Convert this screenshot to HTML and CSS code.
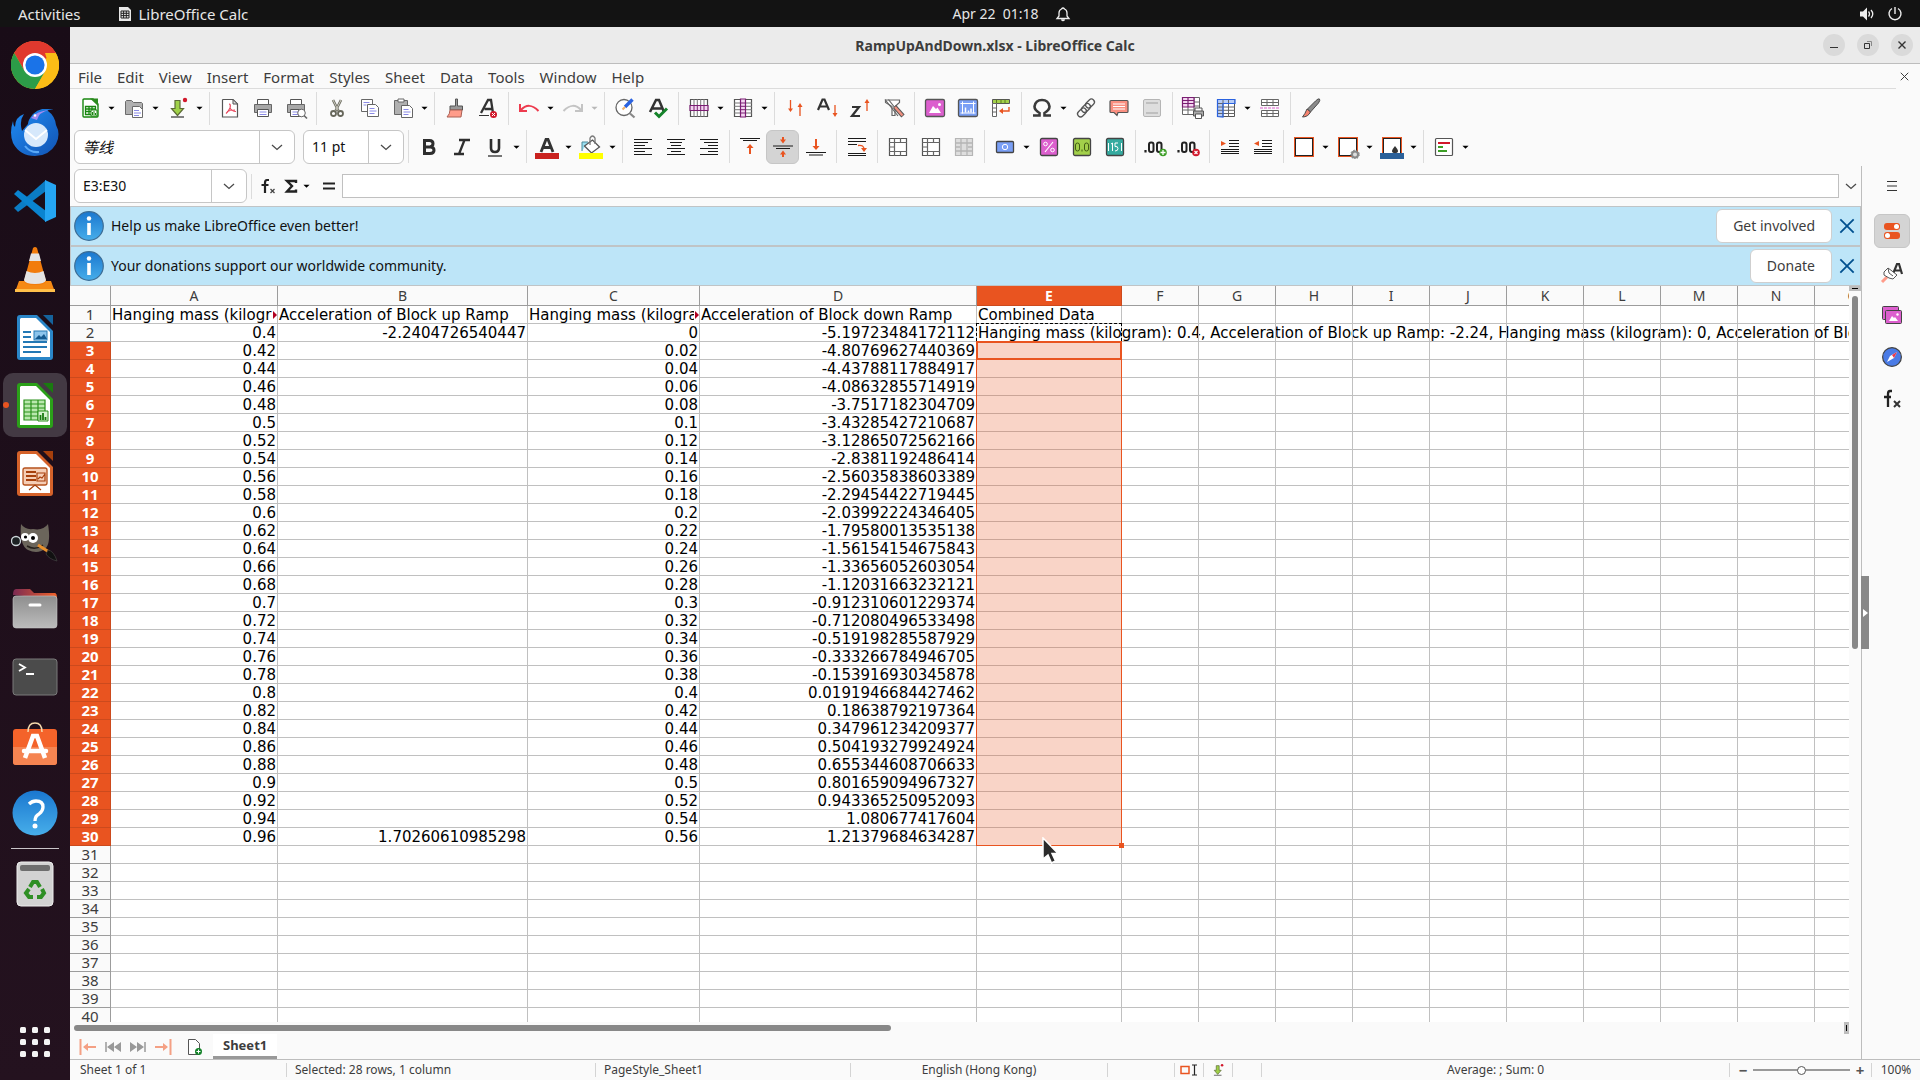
FILE: index.html
```html
<!DOCTYPE html>
<html lang="en">
<head>
<meta charset="utf-8">
<title>RampUpAndDown.xlsx - LibreOffice Calc</title>
<link rel="stylesheet" href="styles.css">
</head>
<body>
<svg class="sprite" aria-hidden="true">
  <defs>
    <linearGradient id="gInfo" x1="0" y1="0" x2="0" y2="1"><stop offset="0" stop-color="#1a77cf"/><stop offset="1" stop-color="#47aeea"/></linearGradient>
    <linearGradient id="gFold" x1="0" y1="0" x2="1" y2="0"><stop offset="0" stop-color="#7b2a52"/><stop offset="1" stop-color="#f0622a"/></linearGradient>
    <linearGradient id="gGrey" x1="0" y1="0" x2="0" y2="1"><stop offset="0" stop-color="#8e8e8e"/><stop offset="1" stop-color="#bcbcbc"/></linearGradient>
    <linearGradient id="gBird" x1="0" y1="0" x2="1" y2="1"><stop offset="0" stop-color="#1f8df5"/><stop offset="1" stop-color="#1253b3"/></linearGradient>
  </defs>
  <symbol id="new" viewBox="0 0 24 24"><path d="M6 3h9l5 5v12q0 1-1 1H6q-1 0-1-1V4q0-1 1-1z" fill="#fff" stroke="#18870f" stroke-width="1.4"/><path d="M12 2.500h8V10z" fill="#2b8a1e"/><path d="M7.500 10.500h10v8h-10zM7.500 13h10M7.500 15.500h6M11 10.500v8M14 10.500v4" fill="none" stroke="#18870f" stroke-width="1.3"/><path d="M13 14h6v6h-6z" fill="#fff" stroke="#18870f"/><path d="M14.500 16v3M16 15v4M17.500 17v2" stroke="#18870f"/></symbol>
  <symbol id="open" viewBox="0 0 24 24"><path d="M3.500 18.500V5.500l1-1h5l2 2h8l1 1v11z" fill="#b0b0b0" stroke="#6b6b6b"/><path d="M10.500 10.500h7l3 3v8h-10z" fill="#fff" stroke="#6b6b6b"/><path d="M12 14.500h5M12 17h7M12 19.500h5" stroke="#8a8ae6"/></symbol>
  <symbol id="save" viewBox="0 0 24 24"><path d="M9 4.500h5v8h3.500l-6 7-6-7H9z" fill="#9fd148" stroke="#5c6b35" stroke-width="1.200"/><path d="M5 21h13" stroke="#4d4d4d" stroke-width="1.400"/><circle cx="19" cy="4" r="2.200" fill="#d1182b"/></symbol>
  <symbol id="pdf" viewBox="0 0 24 24"><path d="M5 3.500h10l4.500 4.500v13H4.500v-17z" fill="#fff" stroke="#555" stroke-width="1.200"/><path d="M15 3.500v4.500h4.500z" fill="#ddd" stroke="#555"/><path d="M11 8q2 0 1 4-2 4-4 5.500M12 12q2 3.500 6 3.500M9 15.500q4-1.500 8-1.500" fill="none" stroke="#e8465c" stroke-width="1.200"/></symbol>
  <symbol id="print" viewBox="0 0 24 24"><path d="M6.500 9V3.500h11V9" fill="#fff" stroke="#555"/><path d="M3.500 8.500h17v8h-17z" fill="#a8a8a8" stroke="#666"/><path d="M6.500 13.500h11v7h-11z" fill="#fff" stroke="#555"/><path d="M8.500 16h7M8.500 18.500h7" stroke="#8a8ae6"/></symbol>
  <symbol id="preview" viewBox="0 0 24 24"><use href="#print"/><circle cx="17.500" cy="17" r="3.800" fill="#fff" stroke="#666"/><path d="M20 19.500l3 3" stroke="#666" stroke-width="1.600"/></symbol>
  <symbol id="cut" viewBox="0 0 24 24"><path d="M8 4l5.500 11M16 4l-5.500 11" stroke="#66665a" stroke-width="2.600"/><path d="M8 4l5.500 11M16 4l-5.500 11" stroke="#d0cfc4" stroke-width="1"/><circle cx="8.500" cy="17.500" r="2.500" fill="none" stroke="#66665a" stroke-width="1.800"/><circle cx="15.500" cy="17.500" r="2.500" fill="none" stroke="#66665a" stroke-width="1.800"/></symbol>
  <symbol id="copy" viewBox="0 0 24 24"><path d="M3.500 3.500h11v12h-11z" fill="#fff" stroke="#666"/><path d="M9.500 8.500h8l3 3v9h-11z" fill="#fff" stroke="#666"/><path d="M5.500 6.500h6M5.500 9h3M11.500 12.500h5M11.500 15h7M11.500 17.500h5" stroke="#8a8ae6"/></symbol>
  <symbol id="paste" viewBox="0 0 24 24"><path d="M3.500 4.500h13v14h-13z" fill="#b0b0b0" stroke="#666"/><path d="M7 3h6v3H7z" fill="#fff" stroke="#666"/><path d="M10.500 9.500h8l3 3v9h-11z" fill="#fff" stroke="#666"/><path d="M12.500 13.500h5M12.500 16h7M12.500 18.500h5" stroke="#8a8ae6"/></symbol>
  <symbol id="brush" viewBox="0 0 24 24"><path d="M12.500 3h2v7h5v4H7v-4h5.500z" fill="#999" stroke="#555"/><path d="M7 14h12l-1 7H4q3-3 3-7z" fill="#ff9c8a" stroke="#aa6055"/></symbol>
  <symbol id="clear" viewBox="0 0 24 24"><path d="M5 17L12 4h3l2 13M8.500 13H16" fill="none" stroke="#333" stroke-width="2.300"/><path d="M3 19.500h10" stroke="#333"/><circle cx="17.500" cy="18.500" r="3.500" fill="#d1182b"/><path d="M16 17l3 3M19 17l-3 3" stroke="#fff"/></symbol>
  <symbol id="undo" viewBox="0 0 24 24"><path d="M3 8v7h7M3.500 14.500Q12 5 21.500 15" fill="none" stroke="#ed3b4e" stroke-width="2"/></symbol>
  <symbol id="redo" viewBox="0 0 24 24"><path d="M21 8v7h-7M20.500 14.500Q12 5 2.500 15" fill="none" stroke="#c4c4c4" stroke-width="2"/></symbol>
  <symbol id="find" viewBox="0 0 24 24"><circle cx="11" cy="11.500" r="8" fill="#fff" stroke="#666" stroke-width="1.300"/><path d="M17 17.500l4.500 4" stroke="#888" stroke-width="2.200"/><path d="M12 11l7.500-7.500" stroke="#2b63e0" stroke-width="3.400"/><path d="M9.500 13.500l2.500-2.500" stroke="#f2b36b" stroke-width="2.200"/></symbol>
  <symbol id="spell" viewBox="0 0 24 24"><path d="M4 16L10 4h3l5 12M6.500 12.500h9" fill="none" stroke="#333" stroke-width="2.500"/><path d="M9 16.500l4 4 8-8" fill="none" stroke="#15832a" stroke-width="3"/></symbol>
  <symbol id="rows" viewBox="0 0 24 24"><path d="M3.500 3.500h17v17h-17z" fill="#fff" stroke="#555" stroke-width="1.200"/><path d="M7 3v18M10.300 3v18M13.700 3v18M17 3v18" stroke="#777"/><path d="M3 9.500h18v5H3z" fill="#f3d6f0" stroke="#7a1d72" stroke-width="1.200"/><path d="M7 9v6M10.300 9v6M13.700 9v6M17 9v6" stroke="#7a1d72"/></symbol>
  <symbol id="cols" viewBox="0 0 24 24"><path d="M3.500 3.500h17v17h-17z" fill="#fff" stroke="#555" stroke-width="1.200"/><path d="M3 7h18M3 10.300h18M3 13.700h18M3 17h18" stroke="#777"/><path d="M9.500 3v18h5V3z" fill="#f3d6f0" stroke="#7a1d72" stroke-width="1.200"/><path d="M9 7h6M9 10.300h6M9 13.700h6M9 17h6" stroke="#7a1d72"/></symbol>
  <symbol id="sort" viewBox="0 0 24 24"><path d="M7.500 4v10M17 9v11" stroke="#e95420" stroke-width="1.300"/><path d="M5 12.500h5l-2.500 3.500zM14.500 11h5L17 7z" fill="#e95420"/></symbol>
  <symbol id="sortaz" viewBox="0 0 24 24"><path d="M2 14L6.500 3.500h2L13 14M4 10.500h7" fill="none" stroke="#333" stroke-width="2.200"/><path d="M19 9v9" stroke="#e95420" stroke-width="1.300"/><path d="M16.500 17h5L19 21z" fill="#e95420"/></symbol>
  <symbol id="sortza" viewBox="0 0 24 24"><path d="M3 11h7l-7 9h8" fill="none" stroke="#333" stroke-width="2.200"/><path d="M18 6v9" stroke="#e95420" stroke-width="1.300"/><path d="M15.500 7h5L18 3z" fill="#e95420"/></symbol>
  <symbol id="filter" viewBox="0 0 24 24"><path d="M3.500 4h14v2.500l-4.500 4v9h-3v-9L3.500 6.500z" fill="#fff" stroke="#666" stroke-width="1.200"/><path d="M3 3.500L16 20M6.500 3.500l7 9" stroke="#666" stroke-width="1.200"/><path d="M12.500 10.500L21 20" stroke="#555" stroke-width="4.400"/><path d="M13 11l7.500 8.500" stroke="#f09080" stroke-width="2.400"/></symbol>
  <symbol id="image" viewBox="0 0 24 24"><rect x="2.500" y="3.500" width="19" height="17" rx="1.500" fill="#dc5fce" stroke="#555" stroke-width="1.300"/><path d="M6 17l4-7 3 3 1.500-1.500L18 17z" fill="#fff"/><circle cx="16.500" cy="8.500" r="1.500" fill="#fff"/></symbol>
  <symbol id="chart" viewBox="0 0 24 24"><rect x="2.500" y="3.500" width="19" height="17" rx="1.500" fill="#7a9ff5" stroke="#555" stroke-width="1.300"/><path d="M6.500 5.500v12M4.500 7.500h15M17.500 5.500v12M4.500 17h15" fill="none" stroke="#fff"/><path d="M9.500 16.500v-5M12.500 16.500v-2M15 16.500v-4" stroke="#fff" stroke-width="1.500"/></symbol>
  <symbol id="pivot" viewBox="0 0 24 24"><path d="M3.500 3.500h17v4h-17z" fill="#a2d04a" stroke="#555"/><path d="M7.500 3.500v4M12 3.500v4M16 3.500v4" stroke="#5c7a20"/><path d="M3.500 7.500h4v13h-4zM3.500 12h4M3.500 16h4" fill="#fff" stroke="#666"/><path d="M20 11v4h-7" fill="none" stroke="#e95420" stroke-width="1.400"/><path d="M14 12v6l-4-3z" fill="#e95420"/></symbol>
  <symbol id="omega" viewBox="0 0 24 24"><path d="M3 19.500h6.500v-2.500Q4.500 14 4.500 10.500 5.500 4 12 4t7.500 6.500q0 3.500-5 6.500v2.500H21" fill="none" stroke="#3a3a3a" stroke-width="2.600"/></symbol>
  <symbol id="link" viewBox="0 0 24 24"><g fill="none" stroke="#555" stroke-width="1.300"><rect x="11" y="4.500" width="10" height="6" rx="3" transform="rotate(-45 16 7.500)"/><rect x="7" y="9" width="10" height="6" rx="3" transform="rotate(-45 12 12)"/><rect x="3" y="13.500" width="10" height="6" rx="3" transform="rotate(-45 8 16.500)"/></g></symbol>
  <symbol id="comment" viewBox="0 0 24 24"><path d="M4 4.500h16q1 0 1 1v10q0 1-1 1h-9l-1 3-3-3H4q-1 0-1-1v-10q0-1 1-1z" fill="#f98f80" stroke="#555" stroke-width="1.200"/><path d="M6 8h12M6 10.500h12M6 13h12" stroke="#fff"/></symbol>
  <symbol id="headfoot" viewBox="0 0 24 24"><rect x="3.500" y="3.500" width="17" height="17" rx="1.500" fill="#dedede" stroke="#b5b5b5"/><path d="M6 7h12M6 17h12" stroke="#b5b5b5" stroke-width="1.300"/></symbol>
  <symbol id="printarea" viewBox="0 0 24 24"><path d="M1.500 1.500h17v17h-17zM13 1v17M1 6h18M1 10h18M1 14h18M7 1v17" fill="#fff" stroke="#666"/><path d="M1.500 1.500H13V11H1.500zM7 1v10M1 4.500h12M1 7.500h12" fill="#f3d6f0" stroke="#7a1d72" stroke-width="1.200"/><path d="M14 15v-3h7v3" fill="#fff" stroke="#555"/><path d="M12.500 15h10v5h-10z" fill="#aaa" stroke="#555"/><path d="M14.500 18h6v4.500h-6z" fill="#fff" stroke="#555"/></symbol>
  <symbol id="freeze" viewBox="0 0 24 24"><path d="M3.500 3.500h17v17h-17z" fill="#fff" stroke="#555"/><path d="M3.500 3.500h17v4H9v13H3.500z" fill="#b7cdf8"/><path d="M9 3v18M14.500 3v18M3 7.500h18M3 11h18M3 14.300h18M3 17.500h18" stroke="#666"/><path d="M9 21V7.500H21V3.500H3.500V20.500z" fill="none" stroke="#2b63e0" stroke-width="1.200"/></symbol>
  <symbol id="split" viewBox="0 0 24 24"><path d="M3.500 3.500h17v6h-17zM3 6.500h18M9 3v7M15 3v7M3.500 14.500h17v6h-17zM3 17.500h18M9 14v7M15 14v7" fill="#fff" stroke="#666"/><path d="M2 12h20" stroke="#dc5fce" stroke-dasharray="3 1"/></symbol>
  <symbol id="draw" viewBox="0 0 24 24"><path d="M20.500 3q1 1-1 4l-8 9-3-3 8-8q3-3 4-2z" fill="#8a8a8a" stroke="#4d4d4d"/><path d="M8 13l3.500 3Q9 21 3.500 21 6 18 8 13z" fill="#f5836f" stroke="#4d4d4d"/></symbol>
  <symbol id="bold" viewBox="0 0 24 24"><path d="M6 5.500h6.500q3.500 0 3.500 3T13 12H8h5.500q3.500 0 3.500 3.200t-4 3.300H6M7.500 4.500v15" fill="none" stroke="#2e2e2e" stroke-width="3"/></symbol>
  <symbol id="italic" viewBox="0 0 24 24"><path d="M9 5h11M4 19h10M14.500 5L9 19" fill="none" stroke="#2e2e2e" stroke-width="2.300"/></symbol>
  <symbol id="underline" viewBox="0 0 24 24"><path d="M8 4v9q0 4 4 4t4-4V4" fill="none" stroke="#2e2e2e" stroke-width="2.600"/><path d="M5 21h14" stroke="#2e2e2e" stroke-width="1.300"/></symbol>
  <symbol id="fontcolor" viewBox="0 0 24 24"><path d="M6 17L11 4.500h2L18 17M8 12.500h8" fill="none" stroke="#333" stroke-width="2.800"/><path d="M0 18h24v6H0z" fill="#c9211e"/></symbol>
  <symbol id="fill" viewBox="0 0 24 24"><path d="M3 16V7h6" fill="#9be0f2" stroke="#4d8a99"/><path d="M5.500 11l8-6 7 7-8 6z" fill="#fff" stroke="#555" stroke-width="1.300"/><path d="M11 10V3q2.500-4 5 0v6" fill="none" stroke="#777" stroke-width="1.300"/><path d="M0 18h24v6H0z" fill="#ff0"/></symbol>
  <symbol id="left" viewBox="0 0 24 24"><path d="M3 4.500h18M3 7.500h14M3 10.500h11M3 13.500h18M3 16.500h11M3 19.500h18" stroke="#1a1a1a" stroke-width="1.100"/></symbol>
  <symbol id="center" viewBox="0 0 24 24"><path d="M3 4.500h18M6 7.500h12M7 10.500h10M3 13.500h18M7 16.500h10M3 19.500h18" stroke="#1a1a1a" stroke-width="1.100"/></symbol>
  <symbol id="right" viewBox="0 0 24 24"><path d="M3 4.500h18M7 7.500h14M11 10.500h10M3 13.500h18M11 16.500h10M3 19.500h18" stroke="#1a1a1a" stroke-width="1.100"/></symbol>
  <symbol id="top" viewBox="0 0 24 24"><path d="M2 3.500h20M5 5.500h14" stroke="#1a1a1a" stroke-width="1.100"/><path d="M12 10v9" stroke="#e95420" stroke-width="2"/><path d="M8.500 13h7L12 9z" fill="#e95420"/></symbol>
  <symbol id="middle" viewBox="0 0 24 24"><path d="M2 11h20M5 13.500h14" stroke="#1a1a1a" stroke-width="1.200"/><path d="M12 2v4M12 18v4" stroke="#e95420" stroke-width="2"/><path d="M9 4.500h6L12 8.500zM9 19.500h6L12 15.500z" fill="#e95420"/></symbol>
  <symbol id="bottom" viewBox="0 0 24 24"><path d="M2 17.500h20M5 20h14" stroke="#1a1a1a" stroke-width="1.100"/><path d="M12 4v8" stroke="#e95420" stroke-width="2"/><path d="M8.500 11h7L12 15z" fill="#e95420"/></symbol>
  <symbol id="wrap" viewBox="0 0 24 24"><path d="M3 3.500h18M3 6.500h18M3 9.500h9M3 18.500h18M3 20.500h18" stroke="#1a1a1a" stroke-width="1.200"/><path d="M13 10.500q6-1 6 4" fill="none" stroke="#e95420" stroke-width="1.400"/><path d="M16 13h6l-3 4z" fill="#e95420"/></symbol>
  <symbol id="merge" viewBox="0 0 24 24"><path d="M3.500 3.500h17v17h-17z" fill="#fff" stroke="#555" stroke-width="1.200"/><path d="M8.500 3v18M3 7.500h18M3 12h6M3 16.500h18M14.500 3v4.500M14.500 16.500V21" stroke="#666" stroke-width="1.200"/></symbol>
  <symbol id="unmerge" viewBox="0 0 24 24"><path d="M3.500 3.500h17v17h-17z" fill="#dedede" stroke="#b5b5b5" stroke-width="1.200"/><path d="M9 3v18M15 3v18M3 8h18M3 16h18M3 12h5M16 12h5" stroke="#b5b5b5" stroke-width="1.300"/></symbol>
  <symbol id="currency" viewBox="0 0 24 24"><rect x="3.500" y="6.500" width="17" height="11" rx="1" fill="#7a9ff5" stroke="#444" stroke-width="1.300"/><circle cx="12" cy="12" r="2.700" fill="none" stroke="#fff"/></symbol>
  <symbol id="percent" viewBox="0 0 24 24"><rect x="3.500" y="3.500" width="17" height="17" rx="1.500" fill="#dc5fce" stroke="#444" stroke-width="1.300"/><path d="M16 7l-8 10" stroke="#fff" stroke-width="1.200"/><circle cx="8.500" cy="9" r="1.800" fill="none" stroke="#fff"/><circle cx="15.500" cy="15" r="1.800" fill="none" stroke="#fff"/></symbol>
  <symbol id="number" viewBox="0 0 24 24"><rect x="3.500" y="3.500" width="17" height="17" rx="1.500" fill="#a2d04a" stroke="#444" stroke-width="1.300"/><rect x="5.500" y="8" width="4" height="8" rx="2" fill="none" stroke="#435c15"/><rect x="14.500" y="8" width="4" height="8" rx="2" fill="none" stroke="#435c15"/><path d="M12 14.500v2" stroke="#435c15"/></symbol>
  <symbol id="date" viewBox="0 0 24 24"><rect x="3.500" y="3.500" width="17" height="17" rx="1.500" fill="#35aba0" stroke="#444" stroke-width="1.300"/><path d="M5.500 8v8M8 9l1.500-1v8M15 8h-3v3.500q3-.5 3 2T12 16M18.500 8v8" fill="none" stroke="#fff"/></symbol>
  <symbol id="adddec" viewBox="0 0 24 24"><path d="M1.500 15v2.500" stroke="#222" stroke-width="2.200"/><rect x="5" y="7.500" width="4.500" height="9.500" rx="2" fill="none" stroke="#222" stroke-width="2"/><rect x="13" y="7.500" width="4.500" height="9.500" rx="2" fill="none" stroke="#222" stroke-width="2"/><circle cx="19" cy="17.500" r="3.800" fill="#3c9e26"/><path d="M16.500 17.500h5M19 15v5" stroke="#fff" stroke-width="1.300"/></symbol>
  <symbol id="deldec" viewBox="0 0 24 24"><path d="M1.500 15v2.500" stroke="#222" stroke-width="2.200"/><rect x="5" y="7.500" width="4.500" height="9.500" rx="2" fill="none" stroke="#222" stroke-width="2"/><rect x="13" y="7.500" width="4.500" height="9.500" rx="2" fill="none" stroke="#222" stroke-width="2"/><circle cx="19" cy="17.500" r="3.800" fill="#d1182b"/><path d="M17.500 16l3 3M20.500 16l-3 3" stroke="#fff" stroke-width="1.200"/></symbol>
  <symbol id="indent" viewBox="0 0 24 24"><path d="M11 5.500h10M11 8.500h10M11 11.500h10M3 14.500h18M3 16.500h18M3 18.500h18" stroke="#1a1a1a" stroke-width="1.200"/><path d="M3 6v5l5-2.500z" fill="#e95420"/></symbol>
  <symbol id="outdent" viewBox="0 0 24 24"><path d="M11 5.500h10M11 8.500h10M11 11.500h10M3 14.500h18M3 16.500h18M3 18.500h18" stroke="#1a1a1a" stroke-width="1.200"/><path d="M8 6v5L3 8.500z" fill="#e95420"/></symbol>
  <symbol id="border" viewBox="0 0 24 24"><rect x="2.500" y="2.500" width="19" height="19" fill="#fff" stroke="#e95420"/><rect x="3.500" y="3.500" width="17" height="17" fill="#fff" stroke="#222"/></symbol>
  <symbol id="bstyle" viewBox="0 0 24 24"><use href="#border"/><circle cx="19" cy="19.500" r="3" fill="#ddd" stroke="#888" stroke-width="2"/><circle cx="19" cy="19.500" r="4.300" fill="none" stroke="#777" stroke-dasharray="1.500 1.500"/></symbol>
  <symbol id="bcolor" viewBox="0 0 24 24"><use href="#border"/><path d="M15 11q3 3.500 3 5 0 2-3 2t-3-2q0-1.500 3-5z" fill="#333"/><path d="M0 18h24v6H0z" fill="#2a6099"/></symbol>
  <symbol id="cond" viewBox="0 0 24 24"><rect x="3.500" y="3.500" width="17" height="17" rx="1" fill="#fff" stroke="#555" stroke-width="1.200"/><path d="M6 8h12" stroke="#d1182b" stroke-width="2"/><path d="M6 12h5M6 16h9" stroke="#3c9e26" stroke-width="2"/></symbol>
  <symbol id="fx" viewBox="0 0 24 24"><path d="M13 6h-2q-2 0-2 3v10M5.500 11h7" fill="none" stroke="#222" stroke-width="2.200"/><path d="M14.500 15l4 4M18.500 15l-4 4" stroke="#444" stroke-width="1.300"/></symbol>
  <symbol id="sigma" viewBox="0 0 24 24"><path d="M17 9V7H8l5 5-5 5.500h9v-2" fill="none" stroke="#222" stroke-width="2.400"/></symbol>
  <symbol id="equal" viewBox="0 0 24 24"><path d="M6 9.500h12M6 14.500h12" stroke="#222" stroke-width="2"/></symbol>
  <symbol id="chev" viewBox="0 0 24 24"><path d="M7 10l5 4.500 5-4.500" fill="none" stroke="#4a4a4a" stroke-width="1.300"/></symbol>
  <symbol id="tri" viewBox="0 0 8 8"><path d="M0.500 2.500h7L4 6z" fill="currentColor"/></symbol>
  <symbol id="info" viewBox="0 0 30 30"><circle cx="15" cy="15" r="14.300" fill="url(#gInfo)" stroke="#3c6d96" stroke-width="1.200"/><path d="M15 12v12" stroke="#fff" stroke-width="3.600"/><circle cx="15" cy="7.500" r="2.200" fill="#fff"/></symbol>
  <symbol id="x" viewBox="0 0 18 18"><path d="M1.500 1.500l15 15M16.500 1.500l-15 15" stroke="currentColor" stroke-width="2"/></symbol>
  <symbol id="menu" viewBox="0 0 24 24"><path d="M7 7.500h10M7 12h10M7 16.500h10" stroke="#333" stroke-width="1.200"/></symbol>
  <symbol id="props" viewBox="0 0 24 24"><rect x="4" y="4" width="16" height="7" rx="3" fill="#e95420"/><rect x="4" y="13" width="16" height="7" rx="3" fill="#e95420"/><circle cx="16.500" cy="7.500" r="2.500" fill="#fff"/><circle cx="7.500" cy="16.500" r="2.500" fill="#fff"/></symbol>
  <symbol id="styles" viewBox="0 0 24 24"><path d="M13 13l4-10h2l3 10M14 9.500h7" fill="none" stroke="#333" stroke-width="2.200"/><path d="M2 21l5-5" stroke="#ff9c8a" stroke-width="3"/><path d="M4 11l4-4 4 3 5 4-4 4-4-1-5-3z" fill="#fff" stroke="#555"/><path d="M8 7l1 5 4 3" fill="none" stroke="#555"/></symbol>
  <symbol id="gallery" viewBox="0 0 24 24"><rect x="2.500" y="3.500" width="16" height="13" rx="1" fill="#dc5fce" stroke="#444"/><rect x="5.500" y="7.500" width="16" height="13" rx="1" fill="#dc5fce" stroke="#444"/><path d="M9 18l3-5 2 2 1-1 3 4z" fill="#fff"/><circle cx="17.500" cy="11.500" r="1.200" fill="#fff"/></symbol>
  <symbol id="nav" viewBox="0 0 24 24"><circle cx="12" cy="12" r="9.400" fill="#4a7be6" stroke="#444" stroke-width="1.200"/><path d="M7 17l3-6 7-4-3 6z" fill="#fff"/><path d="M17 7l-5 3 2 3z" fill="#e8384a"/></symbol>
  <symbol id="func" viewBox="0 0 24 24"><path d="M12 4h-2q-2 0-2 3v13M4 10h7" fill="none" stroke="#222" stroke-width="2.300"/><path d="M14 14l6 6M20 14l-6 6" stroke="#333" stroke-width="2"/></symbol>

  <symbol id="d-chrome" viewBox="0 0 48 48"><circle cx="24" cy="24" r="24" fill="#fbbc16"/><path d="M24 24L3.200 12A24 24 0 0 1 44.800 12z" fill="#e0392e"/><path d="M24 12h20.800A24 24 0 0 0 3.200 12l10.400 18z" fill="#e0392e"/><path d="M3.200 12A24 24 0 0 0 24 48l10.400-18H13.600z" fill="#2c9c48"/><path d="M24 48l10.400-18Q38 22 34 12h10.800A24 24 0 0 1 24 48z" fill="#fbbc16"/><circle cx="24" cy="24" r="12" fill="#fff"/><circle cx="24" cy="24" r="9.600" fill="#1a73e8"/></symbol>
  <symbol id="d-bird" viewBox="0 0 48 48"><path d="M2 12q-4 12 0 22 7 13 22 13 14 0 21-12 5-10 0-19-1-9-8-14-2-2 6-1-13-4-21 4-5 6-5 10l-6 7Q8 12 13 5 4 8 4 18q-2-2-2-6z" fill="url(#gBird)"/><path d="M20 9q6-7 18-8-10 2-12 10z" fill="#a58cf0"/><circle cx="25" cy="26" r="12" fill="#d6e8fb"/><path d="M14 21l11 9 11-9" fill="none" stroke="#fff" stroke-width="2"/><path d="M14 37q5 7 14 6" fill="none" stroke="#5aa9f7" stroke-width="2"/><circle cx="24" cy="6.500" r="1.300" fill="#fff"/></symbol>
  <symbol id="d-code" viewBox="0 0 48 48"><path d="M3 31l4 4 28-21V3z" fill="#0b7cc4"/><path d="M3 17l4-4 28 21v11z" fill="#0a84d0"/><path d="M34 3l11 5v32l-11 5z" fill="#25a5f2"/></symbol>
  <symbol id="d-vlc" viewBox="0 0 48 48"><path d="M8 36h32l4 11H4z" fill="#f58a14"/><path d="M4 44h40v3H4z" fill="#ffc04a"/><path d="M22 3q2-2 4 0l9 33q0 4-11 4t-11-4z" fill="#f27c0c"/><path d="M20 8.500h8l2 7.500H18zM15.500 26q8.500 4 17 0l2.500 9q-1 4-11 4t-11-4z" fill="#e4e4e4"/></symbol>
  <symbol id="d-writer" viewBox="0 0 48 48"><path d="M9 2h17l16 16v26q0 3-3 3H9q-3 0-3-3V5q0-3 3-3z" fill="#2a86c8"/><path d="M10 5h15l14 14v25H9V6z" fill="#fff"/><path d="M32 2h10v10z" fill="#15639c"/><path d="M12 19h8M12 24h8M12 29h24M12 34h24M12 39h18" stroke="#2478b4" stroke-width="2"/><rect x="23" y="18" width="13" height="9" fill="#8cc4ec" stroke="#2478b4"/><path d="M24 26l4-4 2 2 3-3 3 5z" fill="#14598f"/></symbol>
  <symbol id="d-calc" viewBox="0 0 48 48"><path d="M9 2h17l16 16v26q0 3-3 3H9q-3 0-3-3V5q0-3 3-3z" fill="#2ba019"/><path d="M10 5h15l14 14v25H9V6z" fill="#fff"/><path d="M32 2h10v10z" fill="#1a7a10"/><path d="M13 19h21v20H13zM13 23h21M13 27h21M13 31h21M13 35h21M20 19v20M27 19v20" fill="#b9e8ae" stroke="#2a8f1b" stroke-width="1.200"/><path d="M27 30h10v10H27z" fill="#d5f2cd" stroke="#2a8f1b"/><path d="M29.500 34v5M32 32v7M34.500 36v3" stroke="#1a7a10" stroke-width="1.800"/></symbol>
  <symbol id="d-impress" viewBox="0 0 48 48"><path d="M9 2h17l16 16v26q0 3-3 3H9q-3 0-3-3V5q0-3 3-3z" fill="#d5622a"/><path d="M10 5h15l14 14v25H9V6z" fill="#fff"/><path d="M32 2h10v10z" fill="#a63f0c"/><rect x="12" y="19" width="24" height="17" rx="2" fill="#f5cdb5" stroke="#b5521d" stroke-width="1.300"/><path d="M15 23h10M15 27h10M15 31h10" stroke="#a63f0c" stroke-width="2"/><path d="M26 24h8v8h-8zM27 30l2-2 2 1 3-4M24 36l-6 5M24 36l6 5" fill="none" stroke="#a63f0c" stroke-width="1.200"/></symbol>
  <symbol id="d-gimp" viewBox="0 0 48 48"><path d="M10 7q4 6 12 5Q32 14 37 7q3 18-2 24-8 7-18 2Q8 28 10 7z" fill="#6b655b"/><circle cx="5" cy="24" r="4.500" fill="#1c2023" stroke="#cdd6da" stroke-width="1.300"/><circle cx="14" cy="20" r="4" fill="#fff"/><circle cx="22" cy="21" r="5" fill="#fff"/><circle cx="14.500" cy="20" r="1.600"/><circle cx="22" cy="21" r="2"/><path d="M16 29q8 5 16-1" fill="none" stroke="#26211c" stroke-width="1.500"/><path d="M27 28l11 7" stroke="#e8902c" stroke-width="3"/><path d="M37 33q6 1 9 11-8-2-11-7z" fill="#111" stroke="#444" stroke-width=".7"/></symbol>
  <symbol id="d-files" viewBox="0 0 48 48"><path d="M2 10q0-6 3-6h14l4 4h21q2 0 2 6z" fill="url(#gFold)"/><rect x="2" y="11" width="44" height="32" rx="3" fill="url(#gGrey)" stroke="#c8c8c8" stroke-width=".6"/><path d="M19 20h10" stroke="#fff" stroke-width="3" stroke-linecap="round"/></symbol>
  <symbol id="d-term" viewBox="0 0 48 48"><rect x="2" y="6" width="44" height="36" rx="3" fill="#4b4b4b" stroke="#7a7a7a"/><path d="M8 11l6 3.500L8 18M15 21h8" fill="none" stroke="#fff" stroke-width="1.800"/></symbol>
  <symbol id="d-soft" viewBox="0 0 48 48"><rect x="2" y="8" width="44" height="36" rx="3" fill="#f4632a"/><path d="M2 26h44v15q0 3-3 3H5q-3 0-3-3z" fill="#f58451"/><path d="M17 11q0-9 7-9t7 9" fill="none" stroke="#f5d9ac" stroke-width="1.500"/><path d="M14 37l8-22h4l8 22" fill="none" stroke="#fff" stroke-width="4.500"/><path d="M13 30h22" stroke="#fff" stroke-width="4.500" stroke-linecap="round"/></symbol>
  <symbol id="d-help" viewBox="0 0 48 48"><circle cx="24" cy="24" r="22.500" fill="url(#gInfo)"/><path d="M18 15q3-3 7-3 7 0 7 6 0 4-4 7-4 2-4 7" fill="none" stroke="#fff" stroke-width="3.300"/><circle cx="24" cy="37" r="2.500" fill="#fff"/></symbol>
  <symbol id="d-trash" viewBox="0 0 48 48"><rect x="6" y="2" width="36" height="44" rx="4" fill="#d2d2d2" stroke="#eee"/><rect x="9" y="5" width="30" height="6" rx="2" fill="#6e6e6e"/><g fill="none" stroke="#2f8f24" stroke-width="4"><path d="M19 27l3-5h4l3 5M31 29l2 4-3 4h-4M22 37h-4l-3-4 3-4"/></g></symbol>
  <symbol id="d-apps" viewBox="0 0 48 48"><g fill="#f4f4f4"><rect x="9" y="9" width="6" height="6" rx="1.500"/><rect x="21" y="9" width="6" height="6" rx="1.500"/><rect x="33" y="9" width="6" height="6" rx="1.500"/><rect x="9" y="21" width="6" height="6" rx="1.500"/><rect x="21" y="21" width="6" height="6" rx="1.500"/><rect x="33" y="21" width="6" height="6" rx="1.500"/><rect x="9" y="33" width="6" height="6" rx="1.500"/><rect x="21" y="33" width="6" height="6" rx="1.500"/><rect x="33" y="33" width="6" height="6" rx="1.500"/></g></symbol>
</svg>

<header class="topbar">
  <div class="topbar-left">
    <button class="plain">Activities</button>
    <button class="plain app"><svg width="14" height="16" viewBox="0 0 14 16"><path d="M1 1h9l3 3v11H1z" fill="#e8e8e8"/><path d="M3 5h8v7H3zM3 7.300h8M3 9.600h8M5.600 5v7M8.300 5v7" fill="none" stroke="#222"/></svg>LibreOffice Calc</button>
  </div>
  <div class="clock"><time>Apr 22&nbsp; 01:18</time><svg width="16" height="16" viewBox="0 0 16 16"><path d="M2 12.500h12l-2-2.500V7q0-3-2.500-4-1.500-2-3 0Q4 4 4 7v3zM6.500 13.500q1.500 2 3 0" fill="none" stroke="#eee" stroke-width="1.300"/></svg></div>
  <div class="topbar-right">
    <svg width="16" height="16" viewBox="0 0 16 16"><path d="M1 5.500h3L8 1.500v13l-4-4H1z" fill="#eee"/><path d="M9.500 5.500q2 2.500 0 5M12 4q3.500 4 0 8" fill="none" stroke="#eee" stroke-width="1.300"/></svg>
    <svg width="16" height="16" viewBox="0 0 16 16"><path d="M5 2.500a6 6 0 1 0 6 0M8 1v7" fill="none" stroke="#eee" stroke-width="1.400"/></svg>
  </div>
</header>

<div class="desktop">
  <nav class="dock" aria-label="Dock">
    <button aria-label="Chrome"><svg><use href="#d-chrome"/></svg></button>
    <button aria-label="Thunderbird"><svg><use href="#d-bird"/></svg></button>
    <button aria-label="Code"><svg><use href="#d-code"/></svg></button>
    <button aria-label="VLC"><svg><use href="#d-vlc"/></svg></button>
    <button aria-label="Writer"><svg><use href="#d-writer"/></svg></button>
    <button class="active" aria-label="Calc"><svg><use href="#d-calc"/></svg></button>
    <button aria-label="Impress"><svg><use href="#d-impress"/></svg></button>
    <button aria-label="GIMP"><svg><use href="#d-gimp"/></svg></button>
    <button aria-label="Files"><svg><use href="#d-files"/></svg></button>
    <button aria-label="Terminal"><svg><use href="#d-term"/></svg></button>
    <button aria-label="Software"><svg><use href="#d-soft"/></svg></button>
    <button aria-label="Help"><svg><use href="#d-help"/></svg></button>
    <hr>
    <button aria-label="Trash"><svg><use href="#d-trash"/></svg></button>
    <button class="apps" aria-label="Show applications"><svg><use href="#d-apps"/></svg></button>
  </nav>

  <main class="window">
    <div class="titlebar">
      <span></span>
      <h1>RampUpAndDown.xlsx - LibreOffice Calc</h1>
      <div class="winbtns">
        <button aria-label="Minimise"><svg width="22" height="22" viewBox="0 0 22 22"><path d="M7 13.500h8" stroke="#333"/></svg></button>
        <button aria-label="Restore"><svg width="22" height="22" viewBox="0 0 22 22"><path d="M7.500 9.500h5v5h-5z" fill="none" stroke="#333"/><path d="M10 7.500h4.500V12" fill="none" stroke="#888"/></svg></button>
        <button aria-label="Close"><svg width="22" height="22" viewBox="0 0 22 22"><path d="M7.500 7.500l7 7M14.500 7.500l-7 7" stroke="#333" stroke-width="1.400"/></svg></button>
      </div>
    </div>
    <div class="menubar">
      <div class="menus">
        <button>File</button><button>Edit</button><button>View</button><button>Insert</button><button>Format</button><button>Styles</button><button>Sheet</button><button>Data</button><button>Tools</button><button>Window</button><button>Help</button>
      </div>
      <button class="closedoc" aria-label="Close document"><svg><use href="#x"/></svg></button>
    </div>

    <div class="toolbar" id="standard"></div>
    <div class="toolbar lower" id="formatting">
      <div class="combo fontname"><input type="text" value="等线" aria-label="Font name"><button aria-label="Font list"><svg class="i"><use href="#chev"/></svg></button></div>
      <div class="combo fontsize"><input type="text" value="11 pt" aria-label="Font size"><button aria-label="Size list"><svg class="i"><use href="#chev"/></svg></button></div>
    </div>

    <div class="work">
      <div class="doc">
        <div class="formula">
          <div class="combo namebox"><input type="text" value="E3:E30" aria-label="Name box"><button aria-label="Names"><svg class="i"><use href="#chev"/></svg></button></div>
          <span class="sep short"></span>
          <button class="fb" aria-label="Function wizard"><svg class="i"><use href="#fx"/></svg></button>
          <button class="fb" aria-label="Sum"><svg class="i"><use href="#sigma"/></svg></button>
          <button class="drop" aria-label="Sum options"><svg><use href="#tri"/></svg></button>
          <button class="fb wide" aria-label="Formula"><svg class="i"><use href="#equal"/></svg></button>
          <input class="line" type="text" aria-label="Input line">
          <button class="expand" aria-label="Expand"><svg class="i"><use href="#chev"/></svg></button>
        </div>
        <div class="infobar"><svg class="infoi"><use href="#info"/></svg><p>Help us make LibreOffice even better!</p><button class="act">Get involved</button><button class="dismiss" aria-label="Dismiss"><svg><use href="#x"/></svg></button></div>
        <div class="infobar"><svg class="infoi"><use href="#info"/></svg><p>Your donations support our worldwide community.</p><button class="act">Donate</button><button class="dismiss" aria-label="Dismiss"><svg><use href="#x"/></svg></button></div>
        <div class="sheetarea">
          <div class="gridwrap"><table class="grid" id="grid"></table></div>
          <div class="vscroll"><span class="vsplit"></span><span class="vthumb"></span></div>
        </div>
        <div class="hscroll"><span class="hthumb"></span><span class="hsplit"></span></div>
        <div class="tabs">
          <button aria-label="First sheet"><svg viewBox="0 0 18 16"><path d="M1.500 0v16" stroke="#f4a084" stroke-width="2"/><path d="M5 8h12" stroke="#f4a084" stroke-width="2"/><path d="M4 8l5-4v8z" fill="#f4a084"/></svg></button>
          <button aria-label="Previous sheet"><svg viewBox="0 0 18 16"><path d="M2 3v10" stroke="#999" stroke-width="1.500"/><path d="M10 3v10L3 8zM17 3v10l-7-5z" fill="#999"/></svg></button>
          <button aria-label="Next sheet"><svg viewBox="0 0 18 16"><path d="M16 3v10" stroke="#999" stroke-width="1.500"/><path d="M8 3v10l7-5zM1 3v10l7-5z" fill="#999"/></svg></button>
          <button aria-label="Last sheet"><svg viewBox="0 0 18 16"><path d="M16.500 0v16" stroke="#f4a084" stroke-width="2"/><path d="M1 8h12" stroke="#f4a084" stroke-width="2"/><path d="M14 8L9 4v8z" fill="#f4a084"/></svg></button>
          <button class="addsheet" aria-label="Add sheet"><svg viewBox="0 0 18 16"><path d="M3.500.5h7l4 4v11h-11z" fill="#fff" stroke="#555"/><circle cx="13.500" cy="12.500" r="3.500" fill="#15832a"/><path d="M11.500 12.500h4M13.500 10.500v4" stroke="#fff"/></svg></button>
          <button class="tab">Sheet1</button>
        </div>
      </div>
      <aside class="sidebar">
        <button aria-label="Sidebar settings"><svg class="i"><use href="#menu"/></svg></button>
        <button class="on" aria-label="Properties"><svg class="i"><use href="#props"/></svg></button>
        <button aria-label="Styles"><svg class="i"><use href="#styles"/></svg></button>
        <button aria-label="Gallery"><svg class="i"><use href="#gallery"/></svg></button>
        <button aria-label="Navigator"><svg class="i"><use href="#nav"/></svg></button>
        <button aria-label="Functions"><svg class="i"><use href="#func"/></svg></button>
        <span class="handle"><svg width="7" height="8" viewBox="0 0 7 8"><path d="M1 0l5 4-5 4z" fill="#fff"/></svg></span>
      </aside>
    </div>

    <footer class="status">
      <span class="s-sheet">Sheet 1 of 1</span>
      <span class="s-sel">Selected: 28 rows, 1 column</span>
      <span class="s-style">PageStyle_Sheet1</span>
      <span class="s-lang">English (Hong Kong)</span>
      <span class="s-ins"></span>
      <span class="s-ic"><svg width="18" height="12" viewBox="0 0 18 12"><path d="M1 2.500h8v7H1z" fill="none" stroke="#e95420" stroke-width="1.500"/><path d="M12 1h5M12 11h5M14.500 1v10" stroke="#222" stroke-width="1.200"/></svg></span>
      <span class="s-ic"><svg width="14" height="14"><use href="#save"/></svg></span>
      <span class="s-ic"></span>
      <span class="s-sum">Average: ; Sum: 0</span>
      <span class="s-zoom"><button aria-label="Zoom out">−</button><input type="range" min="0" max="100" value="50" aria-label="Zoom"><button aria-label="Zoom in">+</button></span>
      <span class="s-pct">100%</span>
    </footer>
  </main>
</div>
<svg class="pointer" width="18" height="28" viewBox="0 0 18 28"><path d="M1 1v21l5-4 3.500 8 4-2-3.500-7.500h6z" fill="#2b2b2b" stroke="#fff" stroke-width="1.500"/></svg>
<script src="script.js"></script>
</body>
</html>
```
FILE: styles.css
```css
*, *::before, *::after { box-sizing: border-box; }
html, body { height: 100%; }
body {
  margin: 0;
  display: flex;
  flex-direction: column;
  overflow: hidden;
  background: #1a0d18;
  color: #3d3d3d;
  font: 14px/20px "Noto Sans", "Open Sans", "Noto Sans CJK SC", sans-serif;
}
button, input { font: inherit; color: inherit; margin: 0; padding: 0; border: 0; background: none; }
svg { display: block; flex: none; }
.sprite { position: absolute; width: 0; height: 0; }
.i { width: 24px; height: 24px; }

.topbar {
  display: grid;
  grid-template-columns: 1fr auto 1fr;
  align-items: center;
  height: 27px;
  flex: none;
  background: #131313;
  color: #e6e6e6;
}
.topbar-left { display: flex; gap: 37px; padding-left: 18px; font-size: 15px; }
.app { display: flex; align-items: center; gap: 7px; }
.clock { display: flex; align-items: center; gap: 16px; padding-left: 103px; }
.topbar-right { display: flex; justify-content: flex-end; gap: 12px; padding-right: 17px; }

.desktop { flex: 1; display: flex; min-height: 0; }
.dock {
  width: 70px;
  flex: none;
  display: flex;
  flex-direction: column;
  align-items: center;
  padding: 4px 0;
  background: linear-gradient(#190c17, #24121f);
}
.dock button {
  position: relative;
  width: 64px;
  height: 64px;
  flex: none;
  margin: 2px 0;
  display: grid;
  place-items: center;
  border-radius: 10px;
}
.dock svg { width: 48px; height: 48px; }
.dock .active { background: #433943; }
.dock .active::before {
  content: "";
  position: absolute;
  left: 0;
  top: 29px;
  width: 6px;
  height: 6px;
  border-radius: 50%;
  background: #e95420;
}
.dock hr { width: 48px; height: 1px; margin: 1px 0; border: 0; background: #c9c5c9; flex: none; }
.dock .apps { margin-top: auto; }

.window { flex: 1; min-width: 0; display: flex; flex-direction: column; background: #fafafa; }
.titlebar {
  display: grid;
  grid-template-columns: 1fr auto 1fr;
  align-items: center;
  height: 37px;
  flex: none;
  background: #ebebeb;
  border-bottom: 1px solid #bdbdbd;
}
.titlebar h1 { margin: 0; padding-top: 2px; font-size: 14px; font-weight: 700; }
.winbtns { display: flex; justify-content: flex-end; gap: 12px; padding-right: 7px; }
.winbtns button { width: 22px; height: 22px; border-radius: 50%; background: #dadada; }
.menubar { display: flex; align-items: flex-start; justify-content: space-between; height: 25px; flex: none; }
.menus { flex: 1; display: flex; height: 25px; padding-left: 1px; border-bottom: 1px solid #dcdcdc; font-size: 15px; }
.menus button { padding: 0 8px 0 7px; line-height: 26px; }
.closedoc { width: 24px; height: 25px; display: grid; place-items: center start; padding-left: 4px; }
.closedoc svg { width: 9px; height: 9px; }

.toolbar { display: flex; align-items: center; height: 38px; flex: none; padding: 0 3px; }
.toolbar.lower { height: 39px; padding: 0 2px; }
.tb { width: 33px; height: 34px; flex: none; display: grid; place-items: center; }
.tb.on { background: #d4d4d4; border: 1px solid #c6c6c6; border-radius: 6px; }
.drop { width: 11px; height: 34px; flex: none; display: grid; place-items: center; color: #000; }
.drop svg { width: 7px; height: 8px; }
.drop.off { color: #b8b8b8; }
.sep { width: 1px; height: 33px; margin: 0 3px 0 4px; flex: none; background: #dcdcdc; }
.sep.short { height: 25px; }

.combo {
  display: flex;
  height: 34px;
  flex: none;
  margin-left: 2px;
  background: #fff;
  border: 1px solid #c6c6c6;
  border-radius: 6px;
  color: #111;
}
.combo input { flex: 1; min-width: 0; padding-left: 8px; outline: 0; }
.combo button { width: 35px; display: grid; place-items: center; border-left: 1px solid #c6c6c6; }
.fontname { width: 221px; }
.fontname input { font-style: italic; font-size: 15px; }
.fontsize { width: 101px; margin-left: 8px; }
.namebox { width: 173px; }

.work { flex: 1; display: flex; min-height: 0; }
.doc { flex: 1; min-width: 0; display: flex; flex-direction: column; }
.formula { display: flex; align-items: center; height: 40px; flex: none; padding-left: 2px; }
.fb { width: 22px; display: grid; place-items: center; margin-left: 1px; }
.fb.wide { width: 26px; margin-left: 4px; }
.line { flex: 1; height: 24px; border: 1px solid #c0c0c0; background: #fff; }
.expand { width: 22px; padding-right: 4px; display: grid; place-items: center; }

.infobar {
  display: flex;
  align-items: center;
  height: 40px;
  flex: none;
  padding: 0 5px 0 3px;
  background: #bde5f8;
  border: 1px solid #c0c4c6;
  color: #111;
}
.infoi { width: 30px; height: 30px; }
.infobar p { flex: 1; margin: 0 0 0 7px; }
.act {
  height: 34px;
  padding: 0 16px;
  background: #fff;
  border: 1px solid #cfcfcf;
  border-radius: 6px;
  color: #3d3d3d;
}
.dismiss { width: 16px; margin-left: 7px; color: #00508f; }
.dismiss svg { width: 16px; height: 16px; }

.sheetarea { flex: 1; display: flex; min-height: 0; }
.gridwrap { flex: 1; min-width: 0; overflow: hidden; background: #fff; }
.grid { table-layout: fixed; border-spacing: 0; width: 1822px; }
.grid th {
  height: 18px;
  padding: 0;
  background: #fafafa;
  border-right: 1px solid #9c9c9c;
  border-bottom: 1px solid #9c9c9c;
  font-weight: 400;
  font-size: 15px;
  line-height: 17px;
}
.grid thead th { height: 20px; line-height: 19px; font-size: 14px; }
.grid .hot { background: #e95420; border-color: #cc4a1d; color: #fff; font-weight: 700; }
.grid td {
  position: relative;
  height: 18px;
  padding: 2px 1px 0;
  border-right: 1px solid #c0c0c0;
  border-bottom: 1px solid #c0c0c0;
  color: #000;
  font: 15px/15px "DejaVu Sans", sans-serif;
  white-space: nowrap;
}
.grid .num { text-align: right; }
/* Text too long for its cell stops short of the red overflow mark. */
.grid .clip span { display: block; height: 15px; margin-right: 4px; overflow: hidden; }
.grid .clip::after {
  content: "";
  position: absolute;
  right: 0;
  top: 5px;
  border: 4px solid transparent;
  border-left-color: #b00020;
  border-right: 0;
}
.copied::after {
  content: "";
  position: absolute;
  z-index: 1;
  inset: -1px -1px 0 -1px;
  border: 1px dashed #000;
  border-bottom: 0;
}
.selection {
  position: absolute;
  z-index: 2;
  left: -1px;
  top: -1px;
  width: calc(100% + 2px);
  background: rgba(233, 84, 32, .25);
  border: 1px solid #e95420;
}
.selection::before {
  content: "";
  position: absolute;
  inset: -1px -1px auto -1px;
  height: 19px;
  border: 2px solid #e95420;
}
.selection::after {
  content: "";
  position: absolute;
  right: -3px;
  bottom: -3px;
  width: 5px;
  height: 5px;
  background: #e95420;
}
.vscroll { width: 12px; flex: none; display: flex; flex-direction: column; align-items: center; }
.vsplit { align-self: stretch; height: 5px; border: solid #bdbdbd; border-width: 2px 3px; background: #000; }
.vthumb { width: 6px; height: 48%; margin-top: 5px; border-radius: 3px; background: #888; }
.hscroll { display: flex; align-items: center; justify-content: space-between; height: 12px; flex: none; padding: 0 12px 0 4px; }
.hthumb { width: 46%; height: 6px; border-radius: 3px; background: #888; }
.hsplit { width: 5px; height: 12px; border: solid #bdbdbd; border-width: 3px 2px; background: #000; }
.tabs { display: flex; align-items: center; height: 25px; flex: none; padding-left: 9px; gap: 7px; }
.tabs svg { width: 18px; height: 16px; }
.tabs .addsheet { margin-left: 6px; }
.tabs .tab {
  height: 25px;
  margin-left: 3px;
  padding: 0 10px;
  background: #fff;
  border-bottom: 3px solid #999;
  font-size: 13px;
  font-weight: 700;
}

.sidebar {
  position: relative;
  width: 59px;
  flex: none;
  display: flex;
  flex-direction: column;
  align-items: center;
  gap: 8px;
  padding-top: 3px;
  padding-left: 1px;
  border-left: 1px solid #bdbdbd;
}
.sidebar button { width: 36px; height: 34px; display: grid; place-items: center; border: 1px solid transparent; border-radius: 6px; }
.sidebar .on { background: #d4d4d4; border-color: #c6c6c6; }
.sidebar button:first-child { margin-bottom: 3px; }
.handle {
  position: absolute;
  left: -1px;
  top: 410px;
  width: 8px;
  height: 73px;
  display: grid;
  place-items: center;
  background: #888;
}

.status { display: flex; align-items: center; height: 21px; flex: none; border-top: 1px solid #bdbdbd; font-size: 12px; }
.status > span { height: 14px; line-height: 14px; border-right: 1px solid #d4d4d4; flex: none; white-space: nowrap; }
.status .s-sheet { width: 217px; padding-left: 10px; }
.status .s-sel { width: 309px; padding-left: 8px; }
.status .s-style { width: 255px; padding-left: 8px; }
.status .s-lang { width: 257px; text-align: center; }
.status .s-ins { width: 67px; }
.status .s-ic { width: 29px; display: grid; place-items: center; }
.status .s-sum { flex: 1; text-align: center; }
.status .s-zoom { width: 142px; display: flex; align-items: center; justify-content: space-between; padding: 0 6px 0 8px; }
.s-zoom button { width: 10px; font-size: 15px; font-weight: 700; line-height: 14px; color: #555; }
.s-zoom input { appearance: none; width: 97px; height: 2px; background: #999; }
.s-zoom input::-webkit-slider-thumb {
  appearance: none;
  width: 9px;
  height: 9px;
  border: 1px solid #555;
  border-radius: 50%;
  background: #fff;
}
.status .s-pct { width: 48px; text-align: center; border: 0; }

.pointer { position: absolute; z-index: 3; left: 1042px; top: 837px; }
```
FILE: script.js
```js
// "name" is a tool button, "name+" has a drop-down arrow, "|" is a separator.
const bars = {
  standard: "new+ open+ save+ | pdf print preview | cut copy paste+ | brush clear | undo+ redo- | find spell | rows+ cols+ | sort sortaz sortza filter | image chart pivot | omega+ link comment headfoot | printarea freeze+ split | draw",
  formatting: "| bold italic underline+ | fontcolor+ fill+ | left center right | top middle* bottom | wrap | merge merge unmerge | currency+ percent number date | adddec deldec | indent outdent | border+ bstyle+ bcolor+ | cond+"
};
for (const [id, spec] of Object.entries(bars)) {
  let html = "";
  for (const item of spec.split(" ")) {
    if (item === "|") { html += '<span class="sep"></span>'; continue; }
    const name = item.replace(/[-+*]/, "");
    html += `<button class="tb${item.endsWith("*") ? " on" : ""}" aria-label="${name}"><svg class="i"><use href="#${name}"/></svg></button>`;
    if (/[-+]$/.test(item)) html += `<button class="drop${item.endsWith("-") ? " off" : ""}" aria-label="${name} options"><svg><use href="#tri"/></svg></button>`;
  }
  document.getElementById(id).insertAdjacentHTML("beforeend", html);
}

const down = ["-5.19723484172112", "-4.80769627440369", "-4.43788117884917", "-4.08632855714919", "-3.7517182304709", "-3.43285427210687", "-3.12865072562166", "-2.8381192486414", "-2.56035838603389", "-2.29454422719445", "-2.03992224346405", "-1.79580013535138", "-1.56154154675843", "-1.33656052603054", "-1.12031663232121", "-0.912310601229374", "-0.712080496533498", "-0.519198285587929", "-0.333266784946705", "-0.153916930345878", "0.0191946684427462", "0.18638792197364", "0.347961234209377", "0.504193279924924", "0.655344608706633", "0.801659094967327", "0.943365250952093", "1.080677417604", "1.21379684634287"];
const up = { 2: "-2.2404726540447", 30: "1.70260610985298" };
const cols = "ABCDEFGHIJKLMNO".split("");
const widths = [41, 167, 250, 172, 277, 145, 77, 77, 77, 77, 77, 77, 77, 77, 77, 77];
const sel = { first: 3, last: 30 };
const rowHeight = 18;

let html = "<colgroup>" + widths.map(w => `<col style="width:${w}px">`).join("") + "</colgroup><thead><tr><th></th>";
html += cols.map(c => `<th class="${c === "E" ? "hot" : ""}">${c}</th>`).join("") + "</tr></thead><tbody>";
for (let r = 1; r <= 40; r++) {
  const cells = cols.map(() => "<td></td>");
  if (r === 1) {
    cells[0] = cells[2] = '<td class="clip"><span>Hanging mass (kilogram)</span></td>';
    cells[1] = "<td>Acceleration of Block up Ramp</td>";
    cells[3] = "<td>Acceleration of Block down Ramp</td>";
    cells[4] = "<td>Combined Data</td>";
  } else if (r <= sel.last) {
    const n = r - 2;
    cells[0] = `<td class="num">${(40 + 2 * n) / 100}</td>`;
    cells[1] = `<td class="num">${up[r] || ""}</td>`;
    cells[2] = `<td class="num">${2 * n / 100}</td>`;
    cells[3] = `<td class="num">${down[n]}</td>`;
  }
  if (r === 2) cells[4] = '<td class="copied">Hanging mass (kilogram): 0.4, Acceleration of Block up Ramp: -2.24, Hanging mass (kilogram): 0, Acceleration of Block down Ramp: -5.20</td>';
  if (r === sel.first) cells[4] = `<td><div class="selection" style="height:${(sel.last - sel.first + 1) * rowHeight + 1}px"></div></td>`;
  const hot = r >= sel.first && r <= sel.last;
  html += `<tr><th class="${hot ? "hot" : ""}">${r}</th>${cells.join("")}</tr>`;
}
document.getElementById("grid").innerHTML = html + "</tbody>";
```
